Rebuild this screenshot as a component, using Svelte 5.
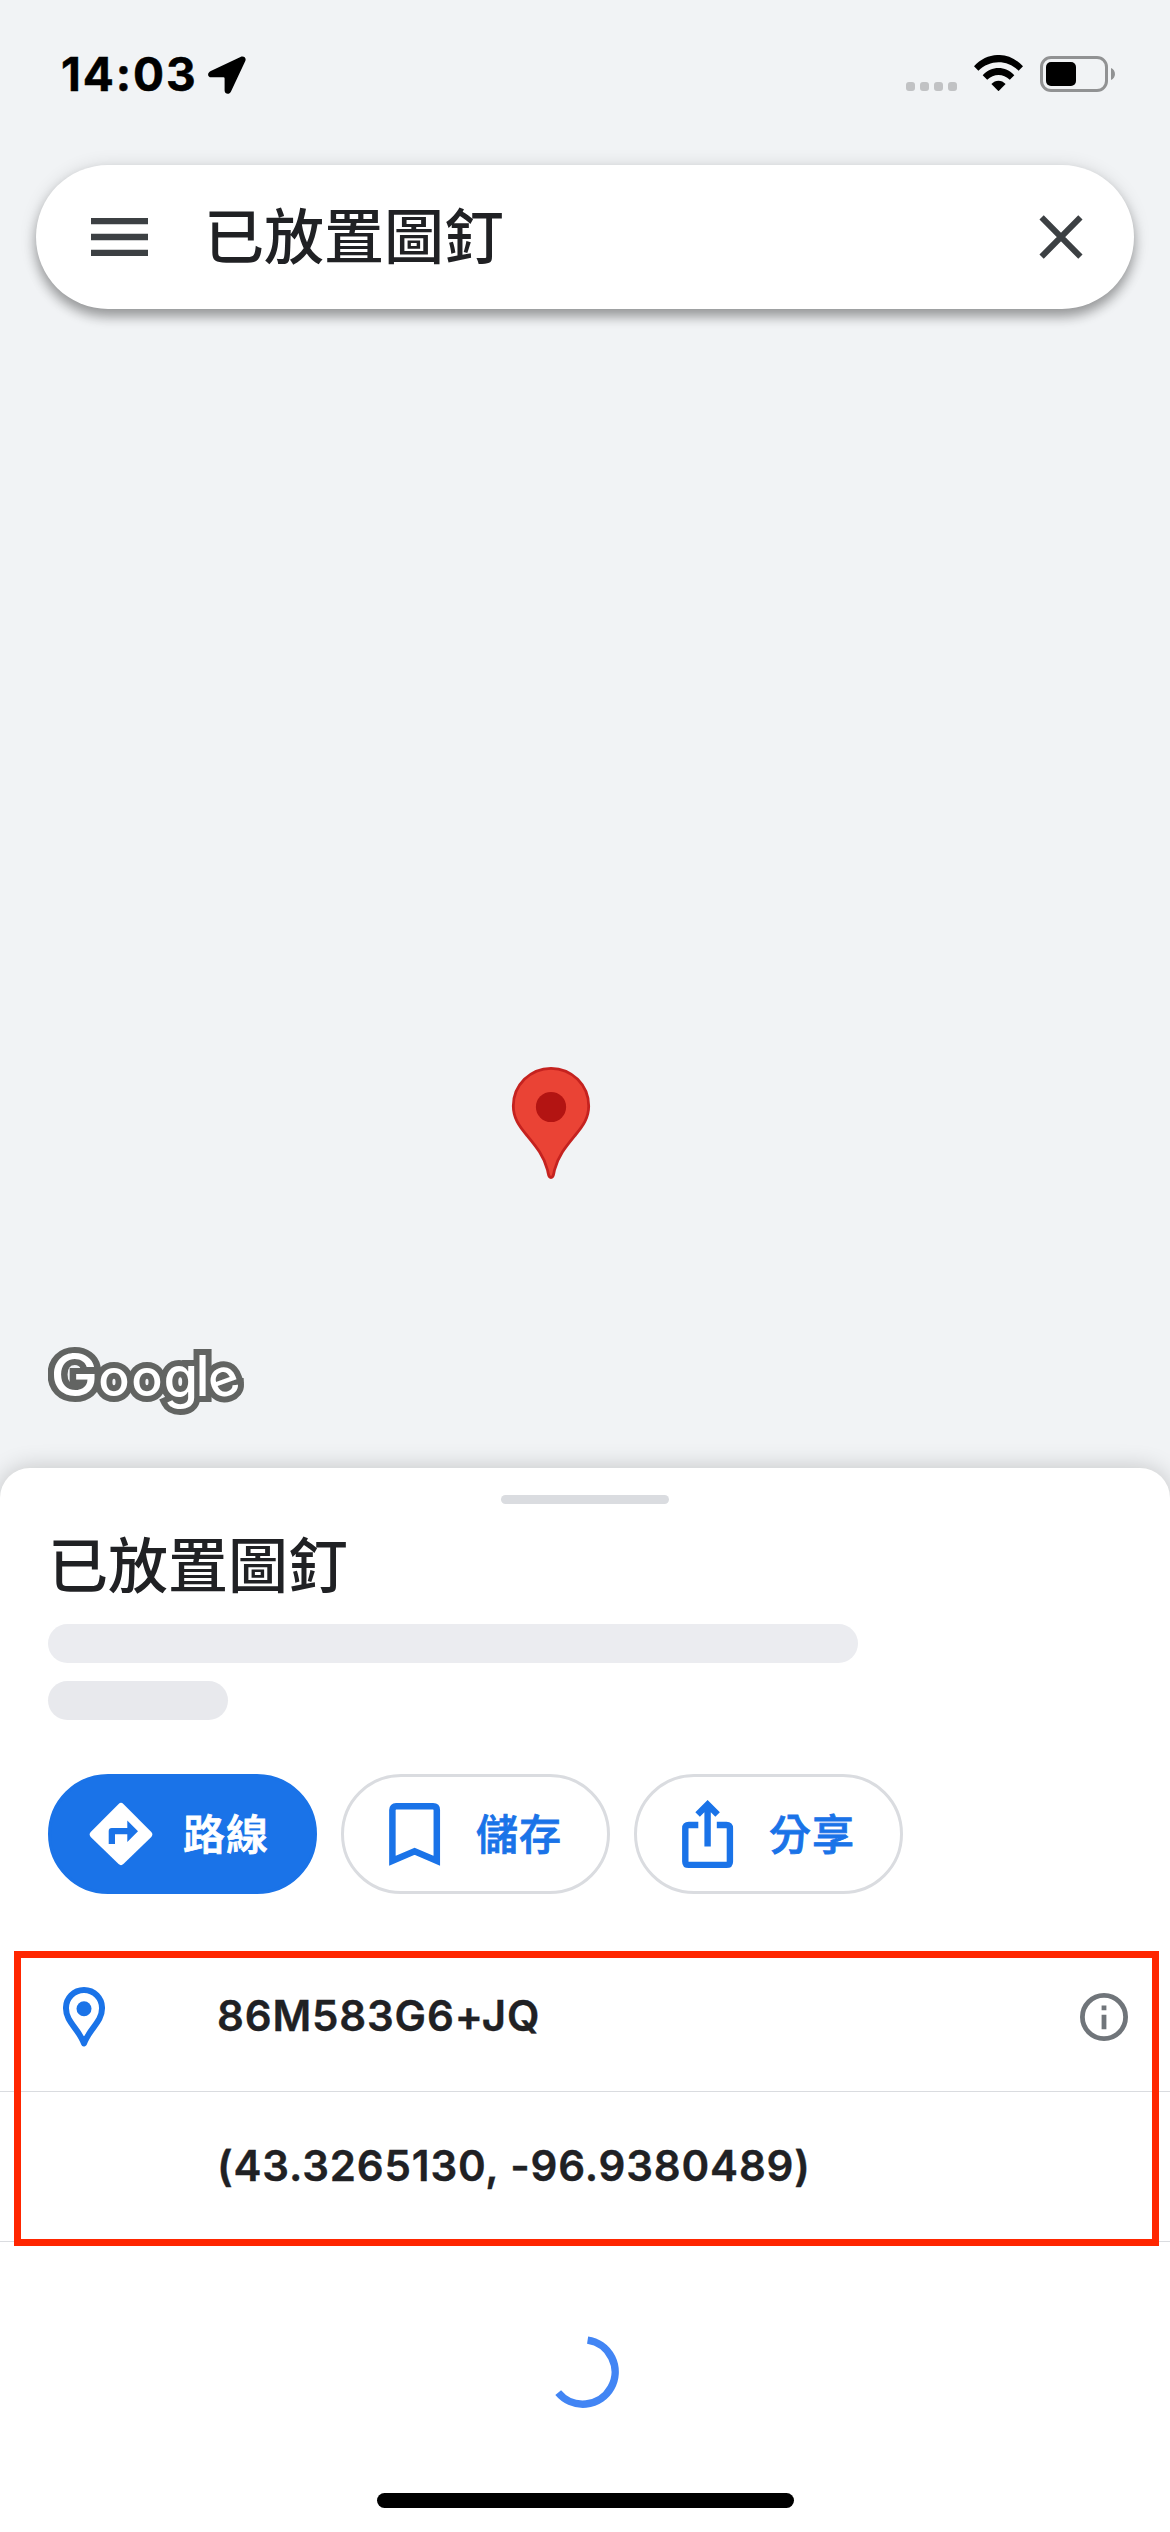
<script>
    let place = "已放置圖釘";
    let plusCode = "86M583G6+JQ";
    let coordinates = "(43.3265130, -96.9380489)";
    let signalDots = [1, 2, 3, 4];
    let placeholders = [
        { width: 810, color: "#ebecf0" },
        { width: 180, color: "#e8e9ed" },
    ];
</script>

<div class="screen">
    <div class="map">
        <header class="status-bar">
            <div class="status-left">
                <span class="time">14:03</span>
                <svg class="location" width="38" height="38" viewBox="0 0 38 38">
                    <path
                        d="M32.5 .9 2.8 15.1C-1.3 17.2-.4 21.2 3.2 21.3H15.4Q16.6 21.3 16.6 22.5V34.5C16.7 38.4 21.4 39 23 35.5L37.4 4.7C38.5 1.8 35.6-.6 32.5 .9Z"
                    />
                </svg>
            </div>
            <div class="status-right">
                <div class="signal">
                    {#each signalDots as dot}
                        <i></i>
                    {/each}
                </div>
                <svg class="wifi" width="49" height="36" viewBox="0 0 49 36">
                    <path
                        d="M0 11.3C13.4-3.8 35.6-3.8 49 11.3L44.6 15.8C33.2 4.4 15.8 4.4 4.4 15.8Z"
                    />
                    <path
                        d="M8.7 20.2C17.5 10.6 31.5 10.6 40.3 20.2L35.8 24.8C29.2 18.4 19.8 18.4 13.2 24.8Z"
                    />
                    <path d="M17.4 29.1C21.2 24.6 27.8 24.6 31.6 29.1L24.5 36.2Z" />
                </svg>
                <div class="battery"><div class="level"></div></div>
                <svg class="nub" width="4" height="12" viewBox="0 0 4 12">
                    <path d="M0 0C5.3 2.3 5.3 9.7 0 12Z" fill="#919293" />
                </svg>
            </div>
        </header>

        <div class="search">
            <svg width="57" height="38" viewBox="0 0 57 38">
                <path
                    d="M0 3.2H57M0 19H57M0 34.8H57"
                    stroke="#3c4043"
                    stroke-width="6.3"
                />
            </svg>
            <span class="search-text">{place}</span>
            <svg width="44" height="44" viewBox="0 0 44 44">
                <path
                    d="M2.6 2.3 41.4 41.7M41.4 2.3 2.6 41.7"
                    stroke="#3c4043"
                    stroke-width="6"
                />
            </svg>
        </div>

        <svg class="marker" width="80" height="114" viewBox="0 0 80 114">
            <path
                d="M40 2.3A37.7 37.7 0 0 0 2.3 40C2.3 52 8 60 16 69.5C25 80.5 33 90 36.5 104C37.5 108 37.2 111.6 40 111.6S42.5 108 43.5 104C47 90 55 80.5 64 69.5C72 60 77.7 52 77.7 40A37.7 37.7 0 0 0 40 2.3Z"
                fill="#ea4335"
                stroke="#c5221f"
                stroke-width="2.8"
            />
            <circle cx="40" cy="41" r="15.1" fill="#b31412" />
        </svg>

        <svg class="logo" width="200" height="76" viewBox="0 0 200 76">
            <defs>
                <g id="wordmark">
                    <text class="cap" y="52" transform="translate(2.6) scale(1.08 1)">G</text>
                    <text y="52" x="50.3 83.3">oo</text>
                    <text class="tall" x="115.5 147.5" y="53 52">gl</text>
                    <text x="160.5" y="52" transform="rotate(-20 176 38)">e</text>
                </g>
            </defs>
            <use href="#wordmark" fill="#626462" stroke="#626462" stroke-width="12" />
            <use href="#wordmark" fill="#fff" />
        </svg>
    </div>

    <main class="sheet">
        <div class="handle"></div>
        <h1>{place}</h1>
        <div class="placeholders">
            {#each placeholders as bar}
                <div
                    class="placeholder"
                    style="width: {bar.width}px; background: {bar.color}"
                ></div>
            {/each}
        </div>

        <div class="actions">
            <button class="action primary">
                <svg width="72" height="72" viewBox="0 0 72 72">
                    <path
                        d="M33.6 5.9Q36 3.7 38.4 5.9L66.3 34.1Q68.5 36.5 66.3 38.9L38.4 66.1Q36 68.3 33.6 66.1L5.7 38.9Q3.5 36.5 5.7 34.1Z"
                        fill="#fff"
                    />
                    <path
                        d="M23.7 46V33Q23.7 30 26.7 30H42.3V22.5L53 33.2 42.3 44V36.3H30V46Z"
                        fill="#1a73e8"
                    />
                </svg>
                <span>路線</span>
            </button>
            <button class="action">
                <svg width="72" height="72" viewBox="0 0 72 72">
                    <path
                        d="M14.4 62.8V12Q14.4 8.3 18.1 8.3H55.1Q58.8 8.3 58.8 12V62.8L36.6 53.3Z"
                        fill="none"
                        stroke="#1a73e8"
                        stroke-width="6.5"
                    />
                </svg>
                <span>儲存</span>
            </button>
            <button class="action">
                <svg width="72" height="72" viewBox="0 0 72 72">
                    <g fill="none" stroke="#1a73e8" stroke-width="6.4">
                        <path
                            d="M27.3 27H17.8Q14.3 27 14.3 30.5V63.4Q14.3 66.9 17.8 66.9H55.4Q58.9 66.9 58.9 63.4V30.5Q58.9 27 55.4 27H45.8"
                        />
                        <path d="M36.6 48.5V8M26.6 16.5 36.6 6.5 46.6 16.5" />
                    </g>
                </svg>
                <span>分享</span>
            </button>
        </div>

        <div class="details">
            <div class="row">
                <svg class="row-icon" width="42" height="60" viewBox="0 0 42 60">
                    <path
                        d="M21 3A18 18 0 0 0 3 21.5C3 35 15.5 41.5 21 56.5C26.5 41.5 39 35 39 21.5A18 18 0 0 0 21 3Z"
                        fill="none"
                        stroke="#1a73e8"
                        stroke-width="6"
                        stroke-linejoin="round"
                    />
                    <circle cx="21" cy="21.7" r="7.5" fill="#1a73e8" />
                </svg>
                <span class="value">{plusCode}</span>
                <svg class="info" width="48" height="48" viewBox="0 0 48 48">
                    <circle
                        cx="24"
                        cy="24"
                        r="21.6"
                        fill="none"
                        stroke="#70757a"
                        stroke-width="4.8"
                    />
                    <path d="M21.6 12.5h4.8v4.8h-4.8zM21.6 21.8h4.8v14.4h-4.8z" fill="#70757a" />
                </svg>
            </div>
            <div class="row">
                <span class="row-icon"></span>
                <span class="value">{coordinates}</span>
            </div>
            <div class="highlight"></div>
        </div>

        <svg class="spinner" width="72" height="72" viewBox="0 0 72 72">
            <path
                d="M40.6 4.1A32.2 32.2 0 1 1 11.2 56.6"
                fill="none"
                stroke="#4285f4"
                stroke-width="7.5"
            />
        </svg>
        <div class="home-bar"></div>
    </main>
</div>

<style>
    :global(body) {
        background: #f1f3f4;
    }

    .screen {
        width: 1170px;
        height: 2532px;
        display: flex;
        flex-direction: column;
        overflow: hidden;
        background: #f1f3f5;
        color: #202124;
        font-family: Inter, "Noto Sans CJK TC", sans-serif;
    }

    svg {
        display: block;
        flex-shrink: 0;
    }

    .map {
        position: relative;
        height: 1468px;
        flex-shrink: 0;
    }

    .status-bar {
        height: 165px;
        box-sizing: border-box;
        padding: 46px 55px 0 61px;
        display: flex;
        justify-content: space-between;
        align-items: flex-start;
    }

    .status-left {
        display: flex;
        align-items: center;
        height: 58px;
    }

    .time {
        width: 147px;
        padding-bottom: 3px;
        color: #000;
        font-size: 46px;
        font-weight: 700;
        letter-spacing: 1.9px;
        -webkit-text-stroke: 0.5px #000;
    }

    .status-right {
        display: flex;
        align-items: center;
        height: 56px;
    }

    .signal {
        display: flex;
        gap: 5px;
        margin: 25px 17px 0 0;
    }

    .signal i {
        width: 9px;
        height: 9px;
        border-radius: 3px;
        background: #c1c2c4;
    }

    .wifi {
        margin: -2px 17px 0 0;
    }

    .battery {
        box-sizing: border-box;
        width: 68px;
        height: 36px;
        padding: 3px;
        border: 3px solid #919293;
        border-radius: 11px;
    }

    .level {
        width: 30px;
        height: 24px;
        border-radius: 5px;
        background: #000;
    }

    .nub {
        margin-left: 3px;
    }

    .search {
        box-sizing: border-box;
        height: 144px;
        margin: 0 36px;
        padding: 0 51px 0 55px;
        display: flex;
        align-items: center;
        background: #fff;
        border-radius: 72px;
        box-shadow:
            0 8px 12px rgba(0, 0, 0, 0.32),
            0 1px 18px rgba(0, 0, 0, 0.12);
    }

    .search-text,
    h1 {
        font-size: 60px;
        font-weight: 500;
        line-height: 88px;
    }

    .search-text {
        flex: 1;
        margin-left: 56px;
    }

    .marker {
        position: absolute;
        left: 511px;
        top: 1066px;
    }

    .logo {
        position: absolute;
        left: 48px;
        top: 1344px;
        font-size: 52px;
        font-weight: 500;
    }

    .logo .cap {
        font-size: 59px;
    }

    .logo .tall {
        font-size: 56px;
    }

    .sheet {
        position: relative;
        flex: 1;
        display: flex;
        flex-direction: column;
        background: #fff;
        border-radius: 30px 30px 0 0;
        box-shadow: 0 0 24px rgba(0, 0, 0, 0.2);
    }

    .handle {
        width: 168px;
        height: 9px;
        margin: 27px auto 0;
        border-radius: 5px;
        background: #dadce0;
    }

    h1 {
        margin: 18px 0 0 48px;
    }

    .placeholders {
        display: flex;
        flex-direction: column;
        gap: 18px;
        margin: 14px 0 0 48px;
    }

    .placeholder {
        height: 39px;
        border-radius: 20px;
    }

    .actions {
        display: flex;
        gap: 24px;
        margin: 54px 0 0 48px;
    }

    .action {
        box-sizing: border-box;
        width: 269px;
        height: 120px;
        padding: 0 0 0 34px;
        display: flex;
        align-items: center;
        gap: 26px;
        border: 3px solid #dadce0;
        border-radius: 60px;
        background: #fff;
        color: #1a73e8;
        font-family: inherit;
        font-size: 42px;
        font-weight: 500;
        letter-spacing: 1px;
        -webkit-text-stroke: 0.8px currentColor;
    }

    .action span {
        padding-bottom: 5px;
    }

    .primary {
        border-color: #1a73e8;
        background: #1a73e8;
        color: #fff;
    }

    .details {
        position: relative;
        margin-top: 48px;
    }

    .row {
        box-sizing: border-box;
        height: 150px;
        padding: 0 42px 0 63px;
        display: flex;
        align-items: center;
        border-bottom: 1px solid #dadce0;
    }

    .row-icon {
        width: 42px;
    }

    .value {
        flex: 1;
        margin-left: 112px;
        padding-bottom: 3px;
        font-size: 42px;
        font-weight: 600;
        letter-spacing: 0.85px;
        -webkit-text-stroke: 0.4px currentColor;
    }

    /* red frame drawn over both rows */
    .highlight {
        position: absolute;
        top: 9px;
        left: 14px;
        right: 11px;
        bottom: -4px;
        border: 7px solid #ff2600;
    }

    .spinner {
        margin: 94px auto 0;
        position: relative;
        left: -2px;
    }

    .home-bar {
        width: 417px;
        height: 15px;
        margin: auto auto 24px;
        border-radius: 8px;
        background: #000;
    }
</style>
